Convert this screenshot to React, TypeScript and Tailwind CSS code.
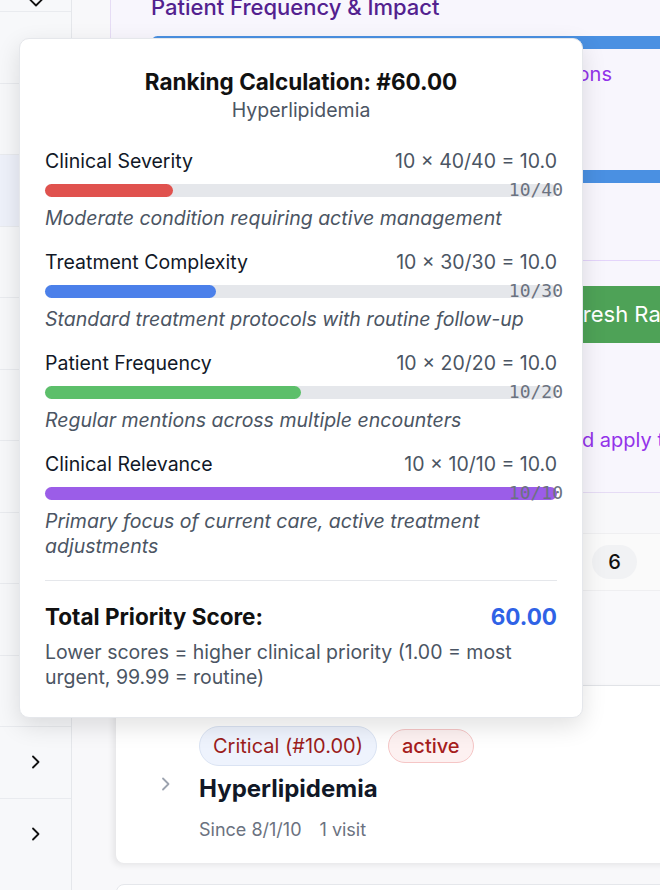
import React from "react";

const factors = [
  { name: "Clinical Severity", formula: "10 × 40/40 = 10.0", score: "10/40", pct: 25, color: "bg-[#e0524e]", desc: "Moderate condition requiring active management" },
  { name: "Treatment Complexity", formula: "10 × 30/30 = 10.0", score: "10/30", pct: 33.33, color: "bg-[#4b80ea]", desc: "Standard treatment protocols with routine follow-up" },
  { name: "Patient Frequency", formula: "10 × 20/20 = 10.0", score: "10/20", pct: 50, color: "bg-[#5cbf6a]", desc: "Regular mentions across multiple encounters" },
  { name: "Clinical Relevance", formula: "10 × 10/10 = 10.0", score: "10/10", pct: 100, color: "bg-[#9b5de8]", desc: "Primary focus of current care, active treatment adjustments" },
];

function ChevronRight({ className }: { className?: string }) {
  return (
    <svg width="10" height="14" viewBox="0 0 10 14" fill="none" className={className}>
      <path d="M2 1.5 L7.5 7 L2 12.5" stroke="currentColor" strokeWidth="1.8" strokeLinecap="round" strokeLinejoin="round" />
    </svg>
  );
}

function RankingTooltip() {
  return (
    <div className="absolute left-[19px] top-[38px] w-[564px] rounded-[10px] border border-[#e5e7eb] bg-white px-[25px] pt-[27.5px] pb-[27.5px] shadow-[0_8px_24px_rgba(0,0,0,0.12)]">
      <div className="text-center">
        <h3 className="text-[22.5px] font-bold leading-[30px] text-[#111111]">Ranking Calculation: #60.00</h3>
        <p className="mt-[1px] text-[19.5px] leading-[25px] text-[#4b5563]">Hyperlipidemia</p>
      </div>

      <div className="mt-[26px] flex flex-col gap-[19px]">
        {factors.map((f) => (
          <div key={f.name}>
            <div className="flex items-center justify-between text-[19.5px] leading-[25px]">
              <span className="text-[#111827]">{f.name}</span>
              <span className="text-[#4b5563]">{f.formula}</span>
            </div>
            <div className="relative mt-[10px] h-[13px] w-full rounded-full bg-[#e5e7eb]">
              <div className={`h-full rounded-full ${f.color}`} style={{ width: `${f.pct}%` }} />
              <span className="absolute right-[-6px] top-1/2 -translate-y-1/2 font-['DejaVu_Sans_Mono',monospace] text-[18px] leading-none text-[#6b7280]">{f.score}</span>
            </div>
            <p className="mt-[9px] text-[19.5px] italic leading-[25px] text-[#4b5563]">{f.desc}</p>
          </div>
        ))}
      </div>

      <div className="mt-[21.5px] border-t border-[#e5e7eb] pt-[21px]">
        <div className="flex items-center justify-between text-[22.5px] font-bold leading-[30px]">
          <span className="text-[#111111]">Total Priority Score:</span>
          <span className="text-[#2f62e6]">60.00</span>
        </div>
        <p className="mt-[7.5px] text-[19.5px] leading-[25px] text-[#4b5563]">
          Lower scores = higher clinical priority (1.00 = most urgent, 99.99 = routine)
        </p>
      </div>
    </div>
  );
}

export default function App() {
  const rows = Array.from({ length: 12 });
  return (
    <div className="relative flex h-[890px] w-[660px] overflow-hidden bg-[#f9fafb] font-['Inter',sans-serif]">
      {/* sidebar */}
      <aside className="flex w-[72px] shrink-0 flex-col border-r border-[#e5e7eb] bg-[#f7f8fa]">
        <div className="flex h-[11px] justify-center">
          <svg width="16" height="9" viewBox="0 0 16 9" fill="none" className="-mt-[2px] text-[#111]">
            <path d="M1.5 1 L8 7.5 L14.5 1" stroke="currentColor" strokeWidth="1.8" strokeLinecap="round" strokeLinejoin="round" />
          </svg>
        </div>
        {rows.map((_, i) => (
          <div
            key={i}
            className={`flex h-[71.5px] shrink-0 items-center justify-center border-t border-[#e9ebef] ${i === 2 ? "bg-[#eef1fa]" : ""}`}
          >
            {i === 10 || i === 11 ? <ChevronRight className="text-[#111]" /> : null}
          </div>
        ))}
      </aside>

      {/* main */}
      <main className="flex min-w-0 flex-1 flex-col overflow-hidden bg-[#f8f8fa] pl-[38px]">
        <section className="w-[620px] shrink-0 border-b border-l border-[#e6dcf5] bg-[#f8f6fd] pl-[40px] pb-[39px]">
          <h2 className="-mt-[8px] text-[22px] font-medium leading-[30px] text-[#53218f]">Patient Frequency &amp; Impact</h2>
          <div className="mt-[14px] h-[13px] rounded-l-full bg-[#4a90e2]" />
          <p className="mt-[12.5px] w-[461px] whitespace-nowrap text-right text-[20px] leading-[25px] text-[#9333ea]">Weighted by frequency of mentions</p>
          <div className="mt-[83.5px] h-[13px] rounded-l-full bg-[#4a90e2]" />
          <div className="mt-[77px] h-px bg-[#e4d4fb]" />
          <button className="ml-[377px] mt-[25px] flex h-[57px] items-center whitespace-nowrap rounded-l-md bg-[#4ea257] pl-[20px] pr-[40px] text-[22px] text-white">
            Refresh Rankings
          </button>
          <p className="mt-[84.5px] whitespace-nowrap text-[20px] leading-[25px] text-[#9333ea]">
            <span className="inline-block w-[431px] text-right">Recalculate all condition scores an</span>d apply to problem list
          </p>
        </section>

        <div className="h-[40px] shrink-0" />
        <div className="flex h-[58px] w-[620px] shrink-0 items-center border-y border-[#efeff1] bg-[#fafafa] pl-[482px]">
          <span className="flex h-[34px] w-[45px] items-center justify-center rounded-full bg-[#f1f2f4] text-[20px] font-medium text-[#111]">6</span>
        </div>
        <div className="h-[95px] w-[620px] shrink-0 border-b border-[#e5e7eb] bg-[#f9f9fb]" />

        <div className="ml-[6px] flex w-[620px] shrink-0 flex-col">
          <div className="flex h-[177px] rounded-b-lg bg-white shadow-[-3px_2px_6px_rgba(0,0,0,0.08)]">
            <div className="flex w-[83px] shrink-0 justify-end pr-[28px] pt-[91px]">
              <ChevronRight className="text-[#9ca3af]" />
            </div>
            <div className="pt-[40px]">
              <div className="flex items-center gap-[11px]">
                <span className="flex h-[40px] items-center rounded-full border border-[#dae3f3] bg-[#eef3fd] px-[13px] text-[20px] text-[#9b1c1c]">Critical (#10.00)</span>
                <span className="flex h-[34px] items-center rounded-full border border-[#f5c6c6] bg-[#fdf1f1] px-[13px] text-[20px] font-medium text-[#a61e1e]">active</span>
              </div>
              <h3 className="mt-[6px] text-[24px] font-bold leading-[34px] text-[#111827]">Hyperlipidemia</h3>
              <div className="mt-[11px] flex gap-[18px] text-[18px] leading-[25px] text-[#6b7280]">
                <span>Since 8/1/10</span>
                <span>1 visit</span>
              </div>
            </div>
          </div>
          <div className="h-[21px]" />
          <div className="h-[60px] rounded-t-lg border border-[#e5e7eb] bg-white" />
        </div>
      </main>

      <RankingTooltip />
    </div>
  );
}
